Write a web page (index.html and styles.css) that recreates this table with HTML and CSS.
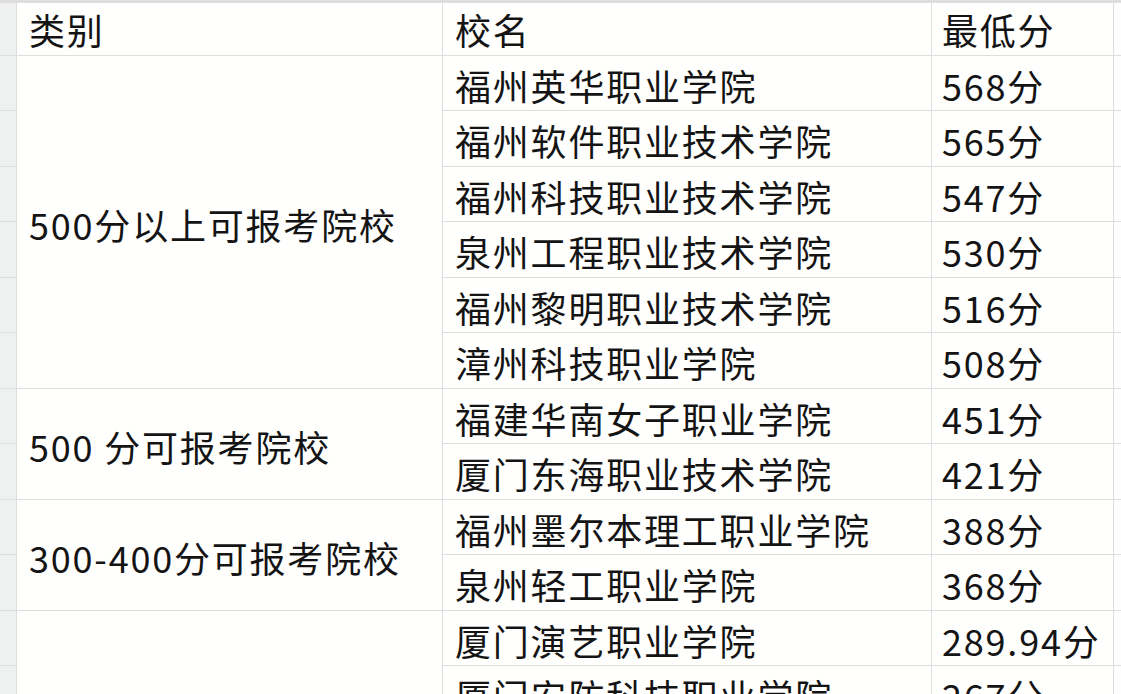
FILE: index.html
```html
<!DOCTYPE html>
<html lang="zh">
<head>
<meta charset="utf-8">
<title>院校分数表</title>
<link rel="stylesheet" href="styles.css">
</head>
<body>
<div class="sheet">
  <div class="gut"></div><div class="cell head">类别</div><div class="cell head">校名</div><div class="cell head score">最低分</div><div class="tail"></div>

  <div class="gut"></div>
  <div class="cell cat span6">500分以上可报考院校</div>
  <div class="cell">福州英华职业学院</div><div class="cell score">568分</div><div class="tail"></div>
  <div class="gut"></div><div class="cell">福州软件职业技术学院</div><div class="cell score">565分</div><div class="tail"></div>
  <div class="gut"></div><div class="cell">福州科技职业技术学院</div><div class="cell score">547分</div><div class="tail"></div>
  <div class="gut"></div><div class="cell">泉州工程职业技术学院</div><div class="cell score">530分</div><div class="tail"></div>
  <div class="gut"></div><div class="cell">福州黎明职业技术学院</div><div class="cell score">516分</div><div class="tail"></div>
  <div class="gut"></div><div class="cell">漳州科技职业学院</div><div class="cell score">508分</div><div class="tail"></div>

  <div class="gut"></div>
  <div class="cell cat span2">500 分可报考院校</div>
  <div class="cell">福建华南女子职业学院</div><div class="cell score">451分</div><div class="tail"></div>
  <div class="gut"></div><div class="cell">厦门东海职业技术学院</div><div class="cell score">421分</div><div class="tail"></div>

  <div class="gut"></div>
  <div class="cell cat span2">300-400分可报考院校</div>
  <div class="cell">福州墨尔本理工职业学院</div><div class="cell score">388分</div><div class="tail"></div>
  <div class="gut"></div><div class="cell">泉州轻工职业学院</div><div class="cell score">368分</div><div class="tail"></div>

  <div class="gut"></div>
  <div class="cell cat span2"></div>
  <div class="cell">厦门演艺职业学院</div><div class="cell score">289.94分</div><div class="tail"></div>
  <div class="gut"></div><div class="cell">厦门安防科技职业学院</div><div class="cell score">267分</div><div class="tail"></div>
</div>
</body>
</html>
```

FILE: styles.css
```css
html, body {
  margin: 0;
  padding: 0;
  background: #ffffff;
  overflow: hidden;
}

.sheet {
  display: grid;
  grid-template-columns: 16px 425px 488px 181px 1fr;
  grid-template-rows: 52px 54px 55px 54px 55px 54px 55px 54px 55px 54px 55px 54px 55px;
  gap: 1px;
  padding-top: 3px;
  background: #dedede;
  height: 694px;
  overflow: hidden;
  font-family: "Noto Sans CJK SC", "Noto Sans", sans-serif;
  font-size: 36px;
  color: #141414;
}

.gut {
  background: #eff0f0;
}

.tail {
  background: #fefefe;
}

.cell {
  background: #fffffe;
  display: flex;
  align-items: center;
  padding: 3px 0 0 12px;
  white-space: nowrap;
  overflow: hidden;
  letter-spacing: 1.8px;
}

.score {
  padding-left: 10px;
}

.head {
  padding-top: 0;
}

.cat {
  padding-left: 12px;
}

.span6 {
  grid-row: span 6;
}

.span2 {
  grid-row: span 2;
}
```
